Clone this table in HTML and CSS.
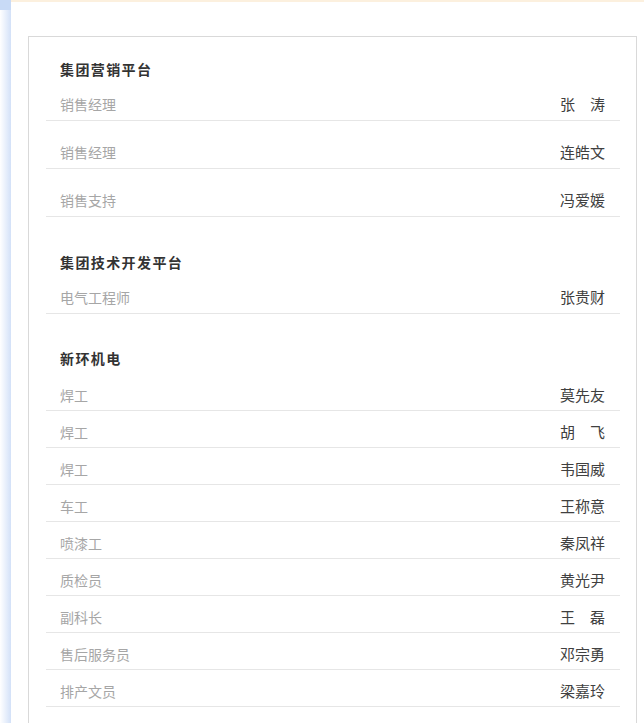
FILE: index.html
```html
<!DOCTYPE html>
<html lang="zh-CN">
<head>
<meta charset="utf-8">
<title>通讯录</title>
<link rel="stylesheet" href="styles.css">
</head>
<body>
<div class="layout">
  <aside class="side-strip"></aside>
  <main class="main">
    <div class="card">
      <section class="section section--loose">
        <h3 class="section-title">集团营销平台</h3>
        <div class="row"><span class="role">销售经理</span><span class="name">张　涛</span></div>
        <div class="row"><span class="role">销售经理</span><span class="name">连皓文</span></div>
        <div class="row"><span class="role">销售支持</span><span class="name">冯爱媛</span></div>
      </section>
      <section class="section section--loose">
        <h3 class="section-title">集团技术开发平台</h3>
        <div class="row"><span class="role">电气工程师</span><span class="name">张贵财</span></div>
      </section>
      <section class="section section--compact">
        <h3 class="section-title">新环机电</h3>
        <div class="row"><span class="role">焊工</span><span class="name">莫先友</span></div>
        <div class="row"><span class="role">焊工</span><span class="name">胡　飞</span></div>
        <div class="row"><span class="role">焊工</span><span class="name">韦国威</span></div>
        <div class="row"><span class="role">车工</span><span class="name">王称意</span></div>
        <div class="row"><span class="role">喷漆工</span><span class="name">秦凤祥</span></div>
        <div class="row"><span class="role">质检员</span><span class="name">黄光尹</span></div>
        <div class="row"><span class="role">副科长</span><span class="name">王　磊</span></div>
        <div class="row"><span class="role">售后服务员</span><span class="name">邓宗勇</span></div>
        <div class="row"><span class="role">排产文员</span><span class="name">梁嘉玲</span></div>
      </section>
    </div>
  </main>
</div>
</body>
</html>
```

FILE: styles.css
```css
* { box-sizing: border-box; }

html, body {
  margin: 0;
  padding: 0;
  background: #ffffff;
  font-family: "Noto Sans CJK SC", "Noto Sans", "Liberation Sans", sans-serif;
}

.layout {
  display: flex;
  min-height: 723px;
}

.side-strip {
  width: 11px;
  flex: 0 0 11px;
  background:
    linear-gradient(#c8daf6, #c8daf6) top left / 100% 10px no-repeat,
    linear-gradient(to right, #ffffff, #d3e1f8);
}

.main {
  flex: 1;
  border-top: 2px solid #fcf0de;
  padding: 34px 7px 0 17px;
}

.card {
  border: 1px solid #d9d9d9;
  border-bottom: none;
  padding: 22px 16px 40px 17px;
  min-height: 700px;
}

.section + .section {
  margin-top: 35px;
}

.section--compact {
  margin-top: 34px;
}

.section + .section--compact {
  margin-top: 34px;
}

.section-title {
  margin: 0;
  padding: 0 14px;
  font-size: 14px;
  line-height: 20px;
  font-weight: bold;
  letter-spacing: 1.4px;
  color: #333333;
}

.row {
  display: flex;
  justify-content: space-between;
  align-items: center;
  padding: 14px 15px 8px 14px;
  border-bottom: 1px solid #e6e6e6;
  line-height: 14px;
  font-size: 14px;
}

.section--loose .row {
  padding-top: 24px;
  padding-bottom: 9px;
}

.section--loose .row:first-of-type {
  padding-top: 18px;
}

.section--compact .row:first-of-type {
  padding-top: 20px;
}

.role {
  color: #a6a6a6;
}

.name {
  color: #404040;
  font-size: 15px;
}
```
